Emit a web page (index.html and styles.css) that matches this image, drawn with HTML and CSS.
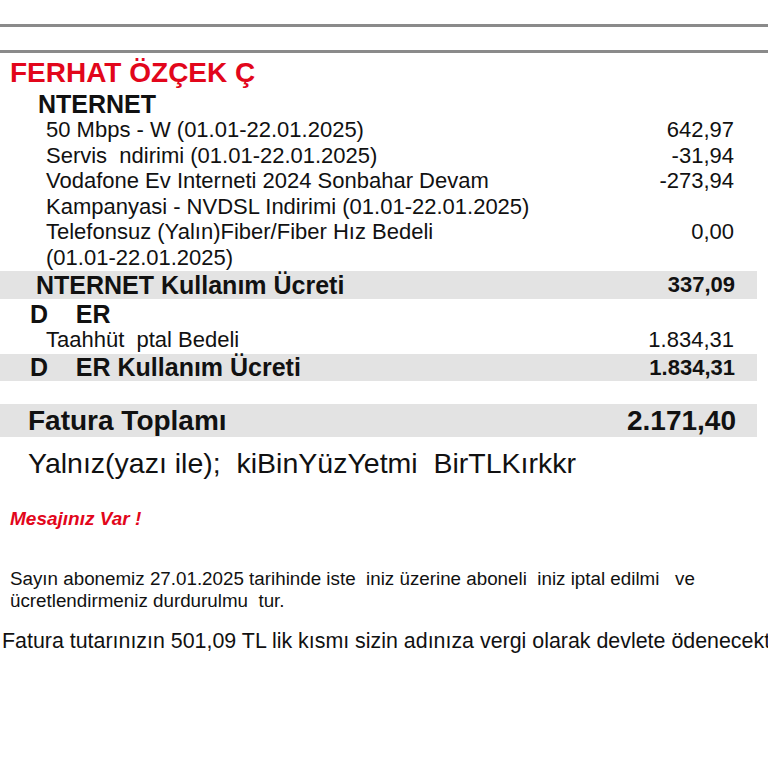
FILE: index.html
```html
<!DOCTYPE html>
<html lang="tr">
<head>
<meta charset="utf-8">
<title>Fatura</title>
<link rel="stylesheet" href="styles.css">
</head>
<body>
<div class="page">
  <div class="rule rule-top"></div>
  <div class="rule rule-second"></div>
  <h1 class="name">FERHAT ÖZÇEK Ç</h1>
  <div class="section-title">NTERNET</div>
  <div class="items">
    <div class="item"><span class="desc">50 Mbps - W (01.01-22.01.2025)</span><span class="amt">642,97</span></div>
    <div class="item"><span class="desc">Servis  ndirimi (01.01-22.01.2025)</span><span class="amt">-31,94</span></div>
    <div class="item"><span class="desc">Vodafone Ev Interneti 2024 Sonbahar Devam<br>Kampanyasi - NVDSL Indirimi (01.01-22.01.2025)</span><span class="amt">-273,94</span></div>
    <div class="item"><span class="desc">Telefonsuz (Yalın)Fiber/Fiber Hız Bedeli<br>(01.01-22.01.2025)</span><span class="amt">0,00</span></div>
  </div>
  <div class="bar bar-sub"><span class="bar-label">NTERNET Kullanım Ücreti</span><span class="bar-value">337,09</span></div>
  <div class="section-title section-title-d">D    ER</div>
  <div class="items">
    <div class="item"><span class="desc">Taahhüt  ptal Bedeli</span><span class="amt">1.834,31</span></div>
  </div>
  <div class="bar bar-sub bar-d"><span class="bar-label">D    ER Kullanım Ücreti</span><span class="bar-value">1.834,31</span></div>
  <div class="bar bar-total"><span>Fatura Toplamı</span><span>2.171,40</span></div>
  <div class="words">Yalnız(yazı ile);  kiBinYüzYetmi  BirTLKırkkr</div>
  <div class="message">Mesajınız Var !</div>
  <p class="notice">Sayın abonemiz 27.01.2025 tarihinde iste  iniz üzerine aboneli  iniz iptal edilmi   ve<br>ücretlendirmeniz durdurulmu  tur.</p>
  <p class="tax">Fatura tutarınızın 501,09 TL lik kısmı sizin adınıza vergi olarak devlete ödenecektir.</p>
</div>
</body>
</html>
```

FILE: styles.css
```css
html, body {
  margin: 0;
  padding: 0;
  background: #ffffff;
}

body {
  font-family: "Liberation Sans", Arial, sans-serif;
  color: #111111;
  overflow: hidden;
}

.page {
  width: 768px;
  height: 768px;
  overflow: hidden;
}

.name, .section-title, .desc, .amt, .bar span, .words, .message, .notice, .tax {
  white-space: pre;
}

.rule {
  height: 3px;
  background: #8a8a8a;
}

.rule-top {
  margin-top: 24px;
}

.rule-second {
  margin-top: 23px;
}

.name {
  margin: 3px 0 0 10px;
  font-size: 28px;
  line-height: 33px;
  font-weight: bold;
  color: #e2061b;
}

.section-title {
  margin-top: 2px;
  padding-left: 38px;
  font-size: 25px;
  line-height: 26px;
  font-weight: bold;
}

.section-title-d {
  padding-left: 30px;
  margin-top: 2px;
}

.items {
  padding: 0 34px 0 46px;
}

.item {
  display: flex;
  justify-content: space-between;
  align-items: flex-start;
  font-size: 22px;
  line-height: 25.5px;
}

.bar {
  width: 757px;
  box-sizing: border-box;
  display: flex;
  justify-content: space-between;
  align-items: center;
  background: #e3e3e3;
  font-weight: bold;
}

.bar-sub {
  height: 28px;
  padding: 0 22px 0 36px;
  margin-top: 1px;
}

.bar-label {
  font-size: 25px;
}

.bar-value {
  font-size: 22px;
}

.bar-d {
  height: 27px;
  margin-top: 1.5px;
  padding-left: 30px;
}

.bar-total {
  height: 33px;
  margin-top: 23px;
  padding: 0 21px 0 28px;
  font-size: 28px;
}

.words {
  padding-left: 28px;
  margin-top: 10px;
  font-size: 28.5px;
  line-height: 32px;
}

.message {
  padding-left: 10px;
  margin-top: 30px;
  font-size: 19px;
  line-height: 20px;
  font-weight: bold;
  font-style: italic;
  color: #e2061b;
}

.notice {
  margin: 39px 0 0 10px;
  font-size: 18.8px;
  line-height: 22px;
}

.tax {
  margin: 17px 0 0 2px;
  font-size: 21.4px;
  line-height: 24px;
}
```
